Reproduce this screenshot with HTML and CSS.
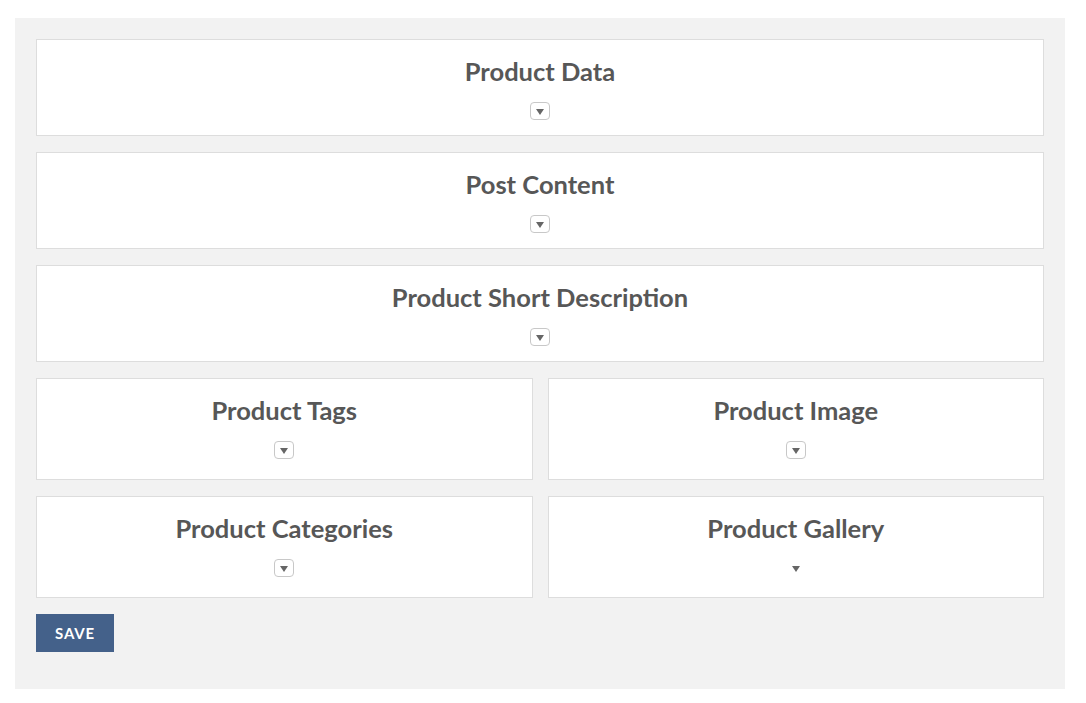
FILE: index.html
```html
<!DOCTYPE html>
<html>
<head>
<meta charset="utf-8">
<link rel="stylesheet" href="styles.css">
</head>
<body>
<div class="panel">
  <div class="card">
    <h2 class="card-title">Product Data</h2>
    <span class="toggle"><span class="tri"></span></span>
  </div>
  <div class="card">
    <h2 class="card-title">Post Content</h2>
    <span class="toggle"><span class="tri"></span></span>
  </div>
  <div class="card">
    <h2 class="card-title">Product Short Description</h2>
    <span class="toggle"><span class="tri"></span></span>
  </div>
  <div class="row">
    <div class="card card-half">
      <h2 class="card-title">Product Tags</h2>
      <span class="toggle"><span class="tri"></span></span>
    </div>
    <div class="card card-half">
      <h2 class="card-title">Product Image</h2>
      <span class="toggle"><span class="tri"></span></span>
    </div>
  </div>
  <div class="row">
    <div class="card card-half">
      <h2 class="card-title">Product Categories</h2>
      <span class="toggle"><span class="tri"></span></span>
    </div>
    <div class="card card-half">
      <h2 class="card-title">Product Gallery</h2>
      <span class="toggle toggle-plain"><span class="tri"></span></span>
    </div>
  </div>
  <div class="actions">
    <button class="save-btn">SAVE</button>
  </div>
</div>
</body>
</html>
```
FILE: styles.css
```css
html, body {
  margin: 0;
  padding: 0;
  background: #ffffff;
  font-family: Lato, "Liberation Sans", sans-serif;
}
.panel {
  box-sizing: border-box;
  width: 1050px;
  margin: 18px 0 0 15px;
  padding: 21px 21px 37px 21px;
  background: #f2f2f2;
  display: flex;
  flex-direction: column;
  gap: 16px;
}
.row {
  display: grid;
  grid-template-columns: 1fr 1fr;
  gap: 15px;
}
.card {
  background: #ffffff;
  border: 1px solid #dddddd;
  padding: 16px 10px 15px;
  display: flex;
  flex-direction: column;
  align-items: center;
}
.card-half {
  padding-bottom: 20px;
}
.card-title {
  margin: 0 0 16px;
  font-size: 25.5px;
  line-height: 30px;
  font-weight: 700;
  color: #575757;
}
.toggle {
  box-sizing: border-box;
  width: 20px;
  height: 18px;
  border: 1px solid #c8c8c8;
  border-radius: 4px;
  display: flex;
  align-items: center;
  justify-content: center;
  background: #ffffff;
}
.toggle-plain {
  border-color: transparent;
}
.tri {
  width: 0;
  height: 0;
  border-left: 4px solid transparent;
  border-right: 4px solid transparent;
  border-top: 6px solid #666666;
  margin-top: 1px;
}
.actions {
  display: flex;
}
.save-btn {
  width: 78px;
  height: 38px;
  border: none;
  background: #44618a;
  color: #ffffff;
  font-family: Lato, "Liberation Sans", sans-serif;
  font-weight: 700;
  font-size: 15px;
  letter-spacing: 0.8px;
  padding: 0;
  cursor: pointer;
}
```
